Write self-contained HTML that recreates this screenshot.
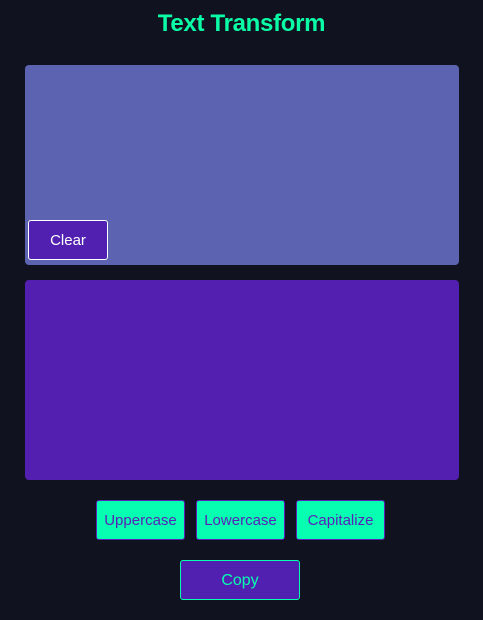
<!DOCTYPE html>
<html><head><style>
body{margin:0;width:483px;height:620px;background:#10131f;font-family:"Liberation Sans",sans-serif;position:relative;overflow:hidden}
.a{position:absolute;box-sizing:border-box}
h1{position:absolute;margin:0;left:0;width:483px;top:10px;text-align:center;font-size:24px;font-weight:bold;color:#0afca6;letter-spacing:-0.3px}
.b{display:flex;align-items:center;justify-content:center;border-radius:3px;padding-top:1px}
.t{background:#06ffb0;border:1px solid #5a20b8;color:#5a20b8;font-size:15px;top:500px;width:89px;height:40px}
</style></head><body>
<h1>Text Transform</h1>
<div class="a" style="left:25px;top:65px;width:434px;height:200px;background:#5c64b2;border-radius:4px"></div>
<div class="a b" style="left:28px;top:220px;width:80px;height:40px;background:#5220b0;border:1px solid #fff;color:#fff;font-size:15px">Clear</div>
<div class="a" style="left:25px;top:280px;width:434px;height:200px;background:#531fb0;border-radius:4px"></div>
<div class="a b t" style="left:96px">Uppercase</div>
<div class="a b t" style="left:196px">Lowercase</div>
<div class="a b t" style="left:296px">Capitalize</div>
<div class="a b" style="left:180px;top:560px;width:120px;height:40px;background:#5220b0;border:1px solid #06ffb0;color:#06ffb0;font-size:16px;padding-top:2px">Copy</div>
</body></html>
